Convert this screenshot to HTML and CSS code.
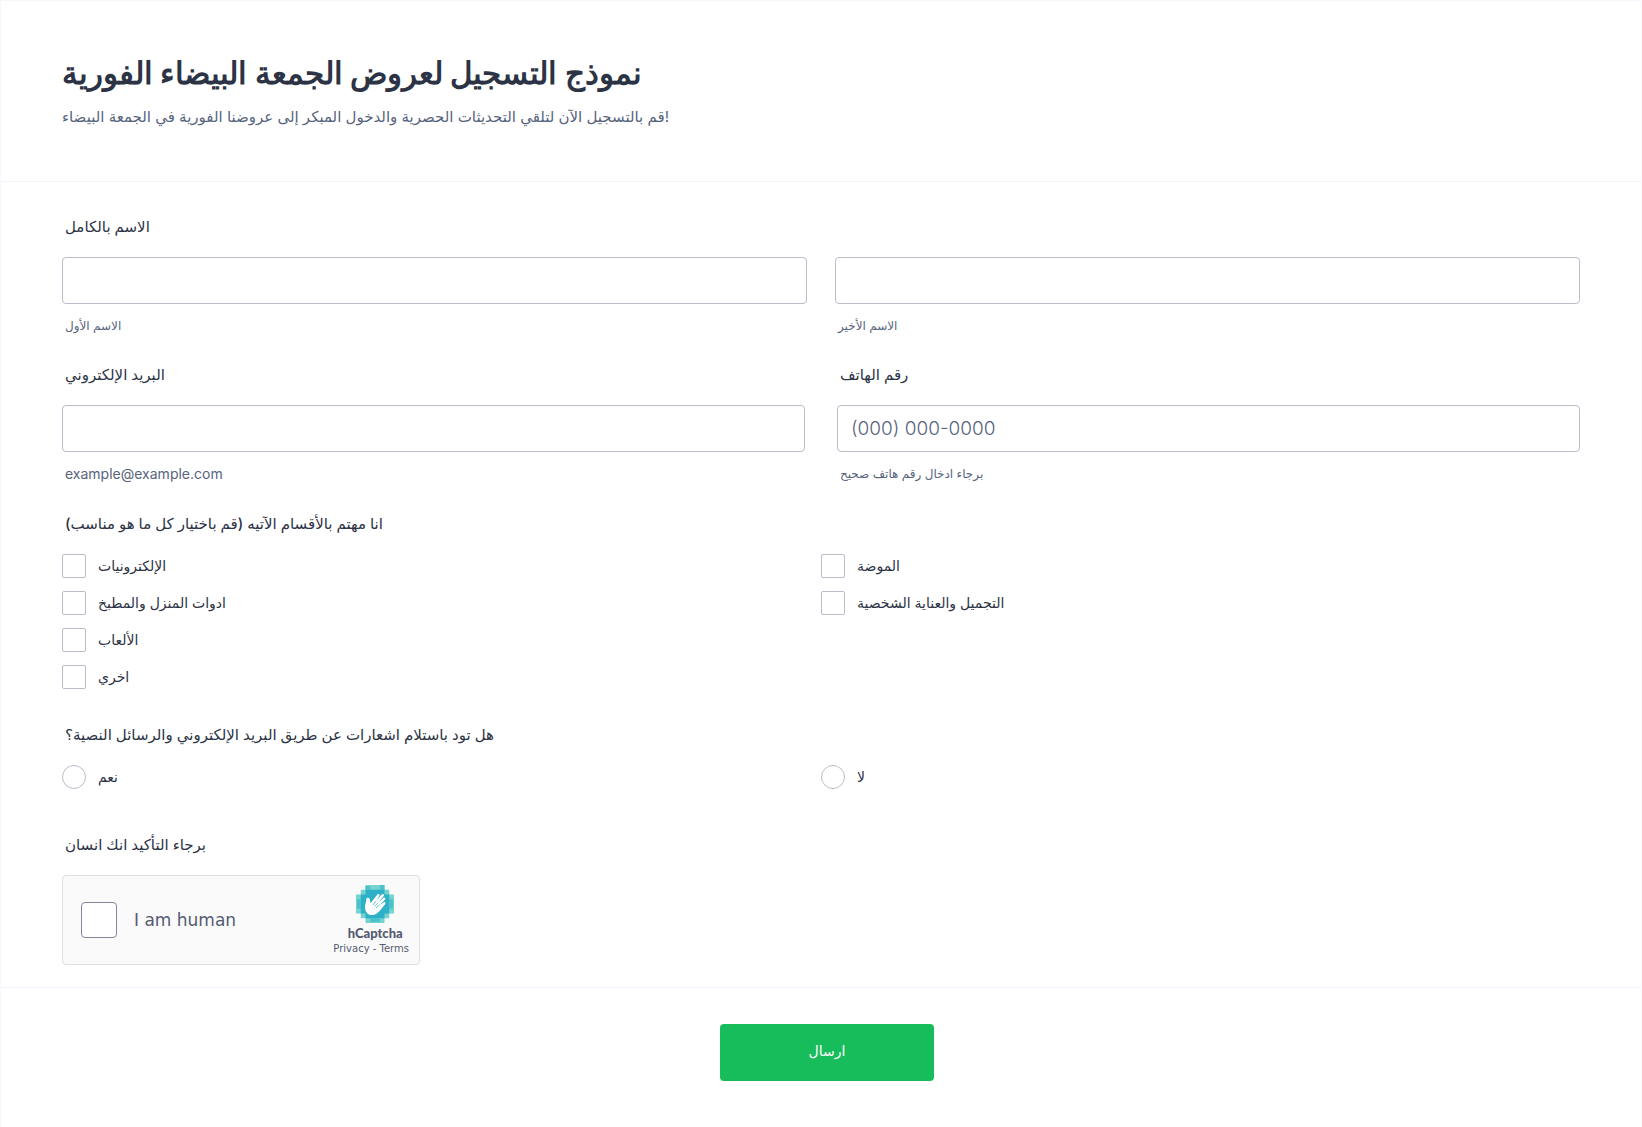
FILE: index.html
```html
<!DOCTYPE html>
<html lang="ar" dir="ltr">
<head>
    <meta charset="UTF-8">
    <meta name="viewport" content="width=device-width, initial-scale=1.0">
    <title>نموذج التسجيل لعروض الجمعة البيضاء الفورية</title>
    <link rel="stylesheet" href="styles.css">
</head>
<body>
    <form class="form">
        <header class="form-header">
            <h1>نموذج التسجيل لعروض الجمعة البيضاء الفورية</h1>
            <p>قم بالتسجيل الآن لتلقي التحديثات الحصرية والدخول المبكر إلى عروضنا الفورية في الجمعة البيضاء!</p>
        </header>

        <div class="form-body">
            <fieldset class="question">
                <legend class="label">الاسم بالكامل</legend>
                <div class="row name-row">
                    <div class="field">
                        <input class="textbox" type="text" id="firstName">
                        <label class="sublabel" for="firstName">الاسم الأول</label>
                    </div>
                    <div class="field">
                        <input class="textbox" type="text" id="lastName">
                        <label class="sublabel" for="lastName">الاسم الأخير</label>
                    </div>
                </div>
            </fieldset>

            <div class="row contact-row">
                <div class="field">
                    <label class="label" for="email">البريد الإلكتروني</label>
                    <input class="textbox" type="email" id="email">
                    <label class="sublabel latin" for="email">example@example.com</label>
                </div>
                <div class="field">
                    <label class="label" for="phone">رقم الهاتف</label>
                    <input class="textbox" type="tel" id="phone" placeholder="(000) 000-0000">
                    <label class="sublabel" for="phone">برجاء ادخال رقم هاتف صحيح</label>
                </div>
            </div>

            <fieldset class="question">
                <legend class="label">انا مهتم بالأقسام الآتيه (قم باختيار كل ما هو مناسب)</legend>
                <div class="options">
                    <label class="option"><input type="checkbox" name="interest">الإلكترونيات</label>
                    <label class="option"><input type="checkbox" name="interest">الموضة</label>
                    <label class="option"><input type="checkbox" name="interest">ادوات المنزل والمطبخ</label>
                    <label class="option"><input type="checkbox" name="interest">التجميل والعناية الشخصية</label>
                    <label class="option first-column"><input type="checkbox" name="interest">الألعاب</label>
                    <label class="option first-column"><input type="checkbox" name="interest">اخري</label>
                </div>
            </fieldset>

            <fieldset class="question">
                <legend class="label">هل تود باستلام اشعارات عن طريق البريد الإلكتروني والرسائل النصية؟</legend>
                <div class="options">
                    <label class="option"><input type="radio" name="notify">نعم</label>
                    <label class="option"><input type="radio" name="notify">لا</label>
                </div>
            </fieldset>

            <div class="captcha-question">
                <label class="label" for="human">برجاء التأكيد انك انسان</label>
                <div class="captcha">
                    <label class="captcha-check"><input type="checkbox" id="human">I am human</label>
                    <div class="captcha-brand">
                        <div class="captcha-name">
                            <svg class="captcha-logo" viewBox="0 0 40 40" aria-hidden="true">
                                <path fill="#75d4ce" d="M10 0h20v5h5v5h5v20h-5v5h-5v5H10v-5H5v-5H0V10h5V5h5z"/>
                                <path fill="#4cc3cb" d="M10 1h5v4h-5zM25 0h5v5h-5zM1 15h4v10H1zM35 15h4v10h-4zM15 35h10v4H15z"/>
                                <path fill="#2fb0c9" d="M10 5h20v5h5v20h-5v5H10v-5H5V10h5z"/>
                                <path fill="#fff" d="M12 30C9 27 9 22 10.500 18C11 15 10.500 14 12 13.500C14 13 15 15 15 18L15.500 19L22.500 10C23.500 8.800 25.500 10 24.700 11.400L21 17L27 10C28.300 8.500 30.200 10 29.200 11.600L23 19L28.600 13.700C30.100 12.400 31.700 14 30.400 15.500L25 21L29 18.300C30.700 17.200 31.900 19 30.500 20.400L25 27C21.500 31.500 16 33.200 12 30z"/>
                                <path fill="none" stroke="#2fb0c9" stroke-width="0.800" d="M21 17l-3 4M23 19l-3.500 3.500M25 21l-4 3"/>
                            </svg>
                            <strong>hCaptcha</strong>
                        </div>
                        <span class="captcha-links"><a href="#">Privacy</a> - <a href="#">Terms</a></span>
                    </div>
                </div>
            </div>
        </div>

        <footer class="form-footer">
            <button type="submit">ارسال</button>
        </footer>
    </form>
</body>
</html>
```
FILE: styles.css
```css
* {
    box-sizing: border-box;
}

body {
    margin: 0;
    background: #fff;
    color: #2c3345;
    font-family: Inter, "DejaVu Sans", sans-serif;
    font-size: 15px;
}

.form {
    min-height: 100vh;
    border: 1px solid #f7f7fd;
    border-bottom: 0;
}

.form-header {
    padding: 50px 61px;
    border-bottom: 1px solid #f3f3fe;
}

.form-header h1 {
    margin: 0;
    font-family: Inter, "Liberation Sans", sans-serif;
    font-size: 31px;
    line-height: 44px;
    font-weight: 700;
}

.form-header p {
    margin: 8px 0 0;
    font-size: 15px;
    line-height: 28px;
    color: #57647e;
}

.form-body {
    padding: 27px 61px 22px;
}

.question {
    margin: 0;
    padding: 0;
    border: 0;
    min-width: 0;
}

.label {
    display: block;
    padding: 0 3px;
    margin-bottom: 12px;
    font-size: 15px;
    line-height: 36px;
    font-weight: 500;
}

.row {
    display: flex;
}

.name-row {
    gap: 28px;
    margin-bottom: 21px;
}

.contact-row {
    gap: 32px;
    margin-bottom: 22px;
}

.field {
    flex: 1;
    min-width: 0;
}

.textbox {
    display: block;
    width: 100%;
    height: 47px;
    padding: 0 13px;
    border: 1px solid #b8bdc9;
    border-radius: 4px;
    background: #fff;
    color: #2c3345;
    font-family: inherit;
    font-size: 19px;
    font-weight: 300;
}

.textbox::placeholder {
    color: #57647e;
    opacity: 1;
}

.sublabel {
    display: block;
    margin-top: 12px;
    padding: 0 3px;
    font-size: 12px;
    line-height: 20px;
    color: #57647e;
}

/* latin letters look smaller than they should at the arabic size */
.sublabel.latin {
    font-size: 14px;
}

.options {
    display: grid;
    grid-template-columns: 1fr 1fr;
    row-gap: 13px;
    margin-bottom: 28px;
}

.option {
    display: flex;
    align-items: center;
    gap: 12px;
    font-size: 14px;
    line-height: 24px;
}

.first-column {
    grid-column: 1;
}

.option input,
.captcha-check input {
    appearance: none;
    flex: none;
    width: 24px;
    height: 24px;
    margin: 0;
    border: 1px solid #b8bdc9;
    border-radius: 2px;
    background: #fff;
}

.option input[type="radio"] {
    border-radius: 50%;
}

.captcha-question {
    padding-top: 10px;
}

.captcha {
    display: flex;
    align-items: center;
    justify-content: space-between;
    width: 358px;
    height: 90px;
    padding: 0 10px 0 18px;
    border: 1px solid #dcdfe3;
    border-radius: 4px;
    background: #fafafa;
    color: #555b73;
    font-family: "DejaVu Sans", sans-serif;
}

.captcha-check {
    display: flex;
    align-items: center;
    gap: 17px;
    font-size: 17px;
}

.captcha-check input {
    width: 36px;
    height: 36px;
    border-color: #84869f;
    border-radius: 4px;
}

.captcha-brand,
.captcha-name {
    display: flex;
    flex-direction: column;
    align-items: center;
}

.captcha-name {
    padding-left: 8px;
}

.captcha-logo {
    width: 38px;
    height: 38px;
}

.captcha-brand strong {
    font-family: Lato, sans-serif;
    font-size: 13px;
    line-height: 20px;
    font-weight: 900;
}

.captcha-links {
    font-size: 10px;
    line-height: 12px;
}

.captcha-links a {
    color: inherit;
    text-decoration: none;
}

.form-footer {
    display: flex;
    justify-content: center;
    padding: 36px 61px 36px 73px;
    border-top: 1px solid #f3f3fe;
}

.form-footer button {
    width: 214px;
    height: 57px;
    padding: 0 0 4px;
    border: 0;
    border-radius: 4px;
    background: #18bd5b;
    color: #fff;
    font-family: inherit;
    font-size: 14px;
    cursor: pointer;
}
```
